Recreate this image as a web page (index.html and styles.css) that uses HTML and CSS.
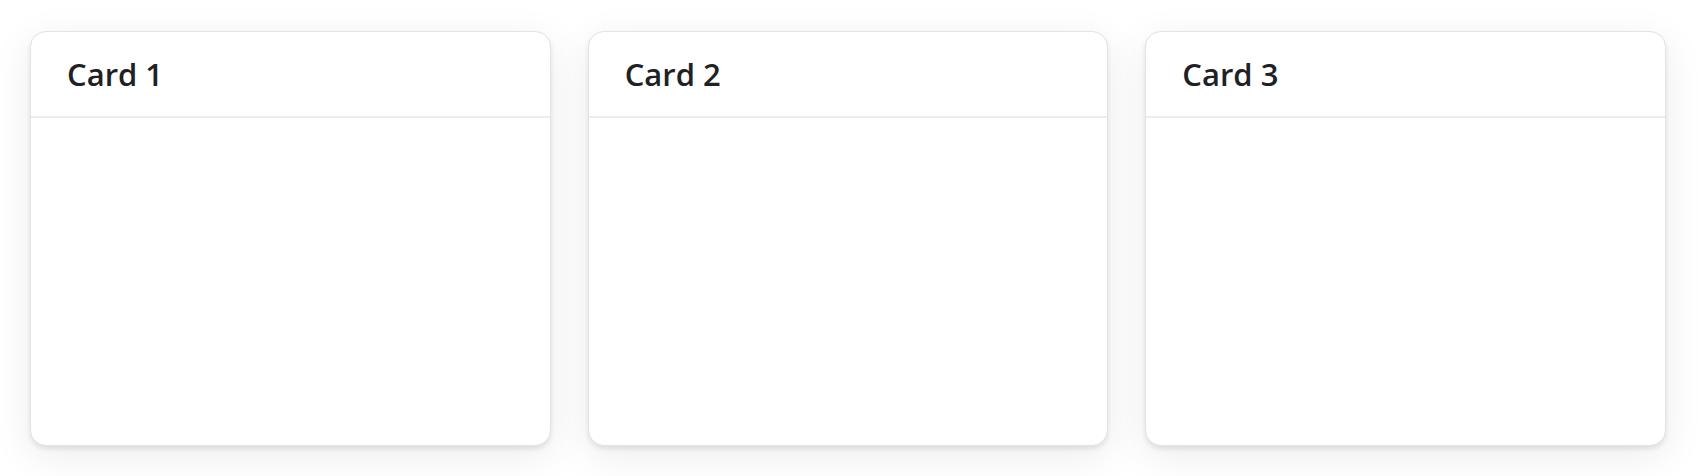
FILE: index.html
```html
<!DOCTYPE html>
<html>
<head>
<meta charset="utf-8">
<link rel="stylesheet" href="styles.css">
</head>
<body>
<div class="grid">
  <div class="card"><div class="card-header">Card 1</div><div class="card-body"></div></div>
  <div class="card"><div class="card-header">Card 2</div><div class="card-body"></div></div>
  <div class="card"><div class="card-header">Card 3</div><div class="card-body"></div></div>
</div>
</body>
</html>
```
FILE: styles.css
```css
html, body {
  margin: 0;
  padding: 0;
  background: #ffffff;
}
body {
  font-family: "Open Sans", sans-serif;
}
.grid {
  display: grid;
  grid-template-columns: repeat(3, 1fr);
  gap: 37px;
  padding: 31px 32px 30px 30px;
}
.card {
  background: #fff;
  border: 1px solid #e3e3e3;
  border-radius: 16px;
  box-shadow: 0 3px 5px rgba(0,0,0,0.09), 0 10px 40px rgba(0,0,0,0.08);
  height: 415px;
  box-sizing: border-box;
  display: flex;
  flex-direction: column;
}
.card-header {
  padding: 23px 36px 22px;
  font-size: 31px;
  font-weight: 650;
  line-height: 39px;
  color: #202124;
  border-bottom: 2px solid #ececec;
}
.card-body {
  flex: 1;
}
```
